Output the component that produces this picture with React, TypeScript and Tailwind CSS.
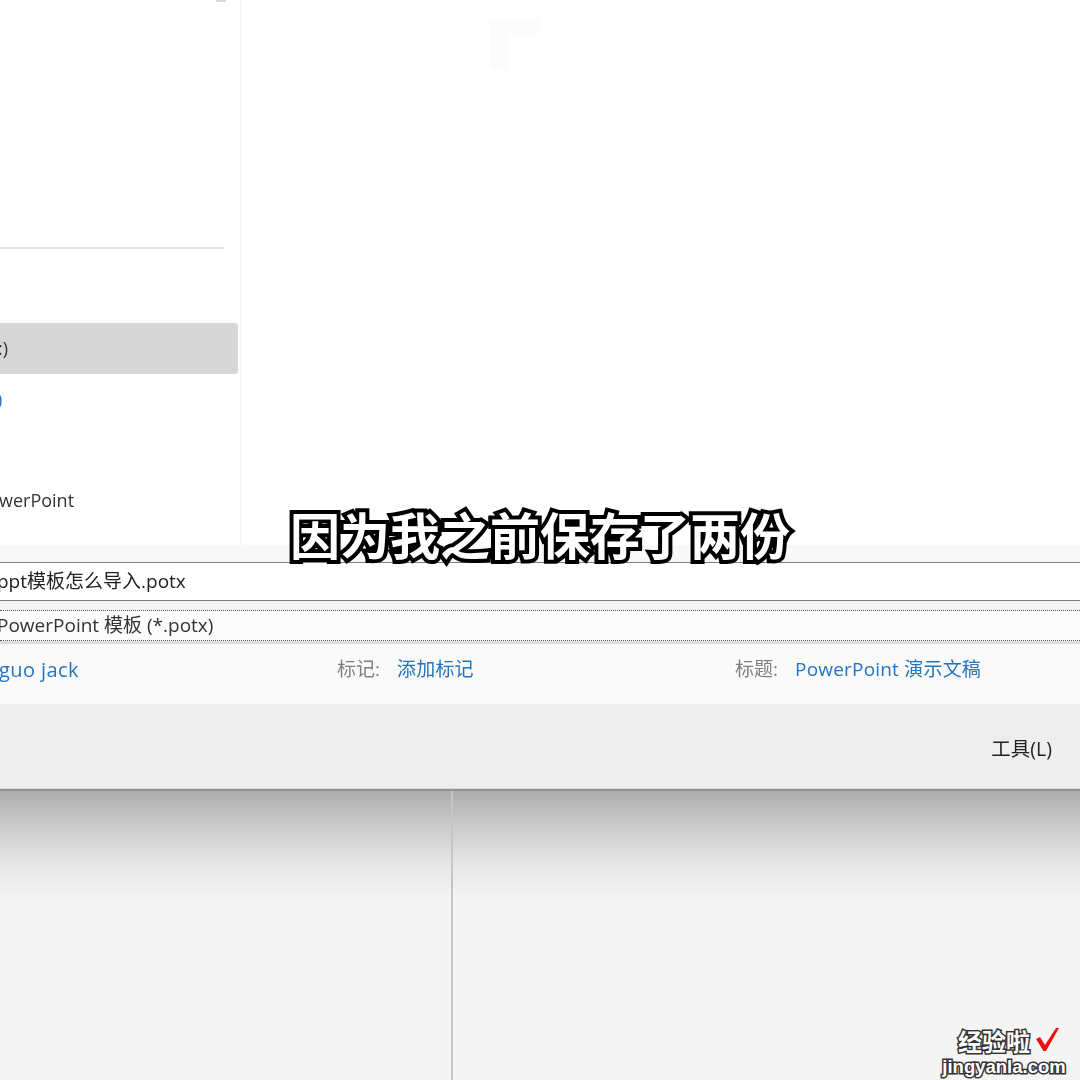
import React from 'react';

const sansFont = "font-['Open_Sans','Noto_Sans_CJK_SC',sans-serif]";

const SidebarRow = ({ label, active, className }: { label?: string; active?: boolean; className?: string }) => (
  <div className={`flex h-[51px] w-[238px] items-center overflow-hidden rounded-r-[3px] text-[18px] ${active ? 'bg-[#d7d7d7]' : ''}`}>
    {label && <span className={`whitespace-nowrap ${className ?? ''}`}>{label}</span>}
  </div>
);

const MetaItem = ({ label, value, className }: { label: string; value: string; className: string }) => (
  <div className={`flex items-center gap-[17px] ${className}`}>
    <span className="text-[19px] text-[#808080]">{label}</span>
    <span className="text-[19px] tracking-[0.2px] text-[#2474c0]">{value}</span>
  </div>
);

export default function App() {
  return (
    <div className={`relative h-[1080px] w-[1080px] overflow-hidden bg-[#f4f4f4] text-[#333] ${sansFont}`}>
      <div className="blur-[0.5px]">
        {/* backstage area above the dialog */}
        <div className="flex h-[545px] bg-white">
          <div className="w-[242px] shrink-0 border-r-2 border-[#f6f6f6]">
            <div className="ml-[216px] h-[2px] w-[10px] bg-[#d8d8d8]" />
            <div className="h-[245px]" />
            <div className="h-[2px] w-[224px] bg-[#e0e0e0]" />
            <div className="h-[74px]" />
            <SidebarRow label=":)" active className="-ml-[2px] text-[#333]" />
            <SidebarRow label=")" className="-ml-[3px] text-[#2474c0]" />
            <SidebarRow />
            <SidebarRow label="werPoint" className="-ml-[1px] -mt-[2px] text-[#333]" />
          </div>
          <div className="flex-1 pl-[248px] pt-[20px]">
            <svg width="50" height="50" viewBox="0 0 50 50">
              <path d="M0 0H50V14H18V50H0Z" fill="#fcfcfc" />
            </svg>
          </div>
        </div>

        {/* save dialog fields */}
        <div className="h-[17px] bg-[#f8f8f8]" />
        <div className="flex h-[39px] items-center overflow-hidden border-y border-y-[#808080] bg-white text-[19px] text-[#222]">
          <span className="-ml-[3px] -mt-[1px] whitespace-nowrap">ppt模板怎么导入.potx</span>
        </div>
        <div className="h-[9px] bg-[#f4f4f4]" />
        <div className="flex h-[31px] items-center overflow-hidden border-y border-dotted border-y-[#555] bg-[#fcfcfc] text-[19px] text-[#333]">
          <span className="-ml-[3px] -mt-[1px] whitespace-nowrap">PowerPoint 模板 (*.potx)</span>
        </div>
        <div className="h-[3px] bg-[#dcdcdc]" />

        {/* author / tags / title */}
        <div className="flex h-[60px] items-start overflow-hidden bg-[#fafafa] pt-[11px]">
          <span className="-ml-[1px] w-[338px] shrink-0 text-[20px] tracking-[0.4px] text-[#2474c0]">guo jack</span>
          <MetaItem label="标记:" value="添加标记" className="w-[398px] shrink-0" />
          <MetaItem label="标题:" value="PowerPoint 演示文稿" className="shrink-0" />
        </div>

        <div className="flex h-[85px] items-center justify-end border-b border-[#dadada] bg-[#eeeeee] pr-[28px] pt-[6px] text-[19.5px] text-[#222]">
          工具(L)
        </div>

        {/* split panes under the dialog, with its drop shadow */}
        <div className="flex h-[291px] border-t-2 border-[#929292]">
          <div className="h-full w-[451px] bg-[linear-gradient(#adadad,#cfcfcf_40px,#eaeaea_80px,#f4f4f4_110px)]" />
          <div className="h-full flex-1 border-l-2 border-[#c6c6c6] bg-[linear-gradient(#adadad,#cfcfcf_40px,#eaeaea_80px,#f4f4f4_110px)]" />
        </div>
      </div>

      {/* subtitle */}
      <div className="absolute left-[290px] top-[501px] whitespace-nowrap font-['Noto_Sans_CJK_SC',sans-serif] text-[50px] leading-[64px] font-bold text-white [-webkit-text-stroke:8px_#000] [paint-order:stroke_fill]">
        因为我之前保存了两份
      </div>

      {/* watermark */}
      <div className="absolute left-[941px] top-[1026px] w-[126px] text-center font-['Noto_Sans_CJK_SC',sans-serif] font-bold text-white [-webkit-text-stroke:3px_#333] [paint-order:stroke_fill]">
        <div className="pr-[20px] text-[24px] leading-[30px]">经验啦</div>
        <div className="font-['Liberation_Sans',sans-serif] text-[18.5px] leading-[22px]">jingyanla.com</div>
      </div>
      <svg className="absolute left-[1034px] top-[1026px]" width="28" height="28" viewBox="0 0 28 28">
        <path d="M2 13L6 11L11 19L22 2H25L12 25H9.5Z" fill="#f01010" />
      </svg>
    </div>
  );
}
